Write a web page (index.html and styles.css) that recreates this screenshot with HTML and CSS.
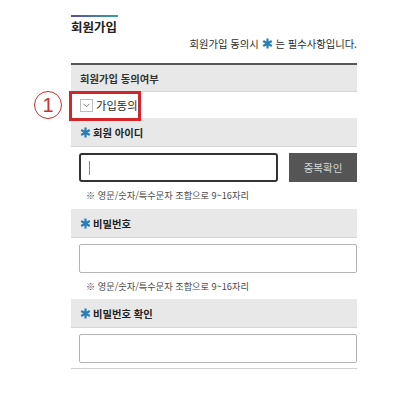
FILE: index.html
```html
<!DOCTYPE html>
<html lang="ko">
<head>
    <meta charset="UTF-8">
    <meta name="viewport" content="width=device-width, initial-scale=1.0">
    <title>회원가입</title>
    <link rel="stylesheet" href="styles.css">
</head>
<body>
    <div class="join">
        <div class="title-line"></div>
        <h2 class="join-title">회원가입</h2>
        <p class="notice">회원가입 동의시 <svg class="req" viewBox="0 0 10 10"><path d="M5 0.5V9.5M1.1 2.75L8.9 7.25M1.1 7.25L8.9 2.75"/></svg> 는 필수사항입니다.</p>

        <div class="form-table">
            <div class="row-head">회원가입 동의여부</div>
            <div class="agree-row">
                <span class="mark">1</span>
                <span class="check">
                    <svg viewBox="0 0 13 13"><polyline points="3,4.5 6.5,8 10,4.5"/></svg>
                </span>
                <span>가입동의</span>
                <span class="highlight"></span>
            </div>

            <div class="row-head">
                <svg class="req" viewBox="0 0 10 10"><path d="M5 0.5V9.5M1.1 2.75L8.9 7.25M1.1 7.25L8.9 2.75"/></svg>
                회원 아이디
            </div>
            <div class="row-body">
                <div class="id-line">
                    <div class="field field-focus"><span class="caret"></span></div>
                    <button class="btn-check">중복확인</button>
                </div>
                <p class="hint">※ 영문/숫자/특수문자 조합으로 9~16자리</p>
            </div>

            <div class="row-head">
                <svg class="req" viewBox="0 0 10 10"><path d="M5 0.5V9.5M1.1 2.75L8.9 7.25M1.1 7.25L8.9 2.75"/></svg>
                비밀번호
            </div>
            <div class="row-body">
                <div class="field field-wide"></div>
                <p class="hint">※ 영문/숫자/특수문자 조합으로 9~16자리</p>
            </div>

            <div class="row-head">
                <svg class="req" viewBox="0 0 10 10"><path d="M5 0.5V9.5M1.1 2.75L8.9 7.25M1.1 7.25L8.9 2.75"/></svg>
                비밀번호 확인
            </div>
            <div class="row-body row-last">
                <div class="field field-wide"></div>
            </div>
        </div>
    </div>
</body>
</html>
```

FILE: styles.css
```css
* {
    margin: 0;
    padding: 0;
    box-sizing: border-box;
}

body {
    background: #fff;
    color: #222;
    font-family: 'Noto Sans CJK KR', 'Noto Sans', sans-serif;
}

.join {
    width: 286px;
    margin-left: 71px;
    padding-top: 15px;
}

.title-line {
    width: 47px;
    height: 2px;
    background: linear-gradient(90deg, #5b4f98, #3a9fa8);
}

.join-title {
    margin-top: 1px;
    font-size: 12.5px;
    line-height: 18px;
    font-weight: bold;
    color: #222;
}

.notice {
    margin-top: 1px;
    font-size: 10.3px;
    line-height: 14px;
    text-align: right;
    color: #2a2a2a;
}

.req {
    width: 11px;
    height: 11px;
    vertical-align: -1px;
    fill: none;
    stroke: #2a7db5;
    stroke-width: 2;
}

.form-table {
    margin-top: 12px;
    border-top: 2px solid #555;
}

.row-head {
    height: 29px;
    display: flex;
    align-items: center;
    gap: 2px;
    padding-left: 9px;
    background: #e8e8e8;
    border-bottom: 1px solid #d6d6d6;
    font-size: 10.3px;
    font-weight: bold;
    color: #222;
}

.form-table > .row-head:first-child {
    height: 27px;
    font-weight: 600;
    color: #333;
}

.agree-row {
    position: relative;
    height: 26px;
    display: flex;
    align-items: center;
    gap: 3px;
    padding-left: 9px;
    font-size: 11.3px;
    color: #2a2a2a;
}

.check {
    width: 13px;
    height: 13px;
    border: 1px solid #bdbdbd;
    background: #fff;
}

.check svg {
    display: block;
    width: 11px;
    height: 11px;
    fill: none;
    stroke: #666;
    stroke-width: 1;
}

/* annotation marks over the row */
.highlight {
    position: absolute;
    left: -2px;
    top: -1px;
    width: 72px;
    height: 30px;
    border: 3px solid #d3262b;
}

.mark {
    position: absolute;
    left: -37px;
    top: -1px;
    width: 28px;
    height: 28px;
    border: 1.5px solid #c8302c;
    border-radius: 50%;
    display: flex;
    align-items: center;
    justify-content: center;
    font-family: 'Liberation Sans', sans-serif;
    font-size: 20px;
    color: #c8302c;
}

.row-body {
    padding-top: 6px;
}

.row-last {
    padding-bottom: 5px;
    border-bottom: 1px solid #d0d0d0;
}

.id-line {
    display: flex;
    gap: 11px;
    padding-left: 8px;
}

.field {
    height: 29px;
    border: 1px solid #b4b4b4;
    border-radius: 2px;
    background: #fff;
}

.field-focus {
    width: 199px;
    border: 2px solid #333;
    border-radius: 3px;
    display: flex;
    align-items: center;
    padding-left: 8px;
}

.field-wide {
    margin-left: 8px;
    width: 278px;
}

.caret {
    width: 1px;
    height: 14px;
    background: #888;
}

.btn-check {
    width: 68px;
    height: 29px;
    border: none;
    background: #555;
    color: #d8d8d8;
    font-family: inherit;
    font-size: 10.5px;
}

.hint {
    height: 27px;
    line-height: 27px;
    padding-left: 15px;
    font-size: 9.2px;
    color: #4a4a4a;
}

.row-body + .row-head + .row-body .hint {
    height: 26px;
    line-height: 26px;
}
```
